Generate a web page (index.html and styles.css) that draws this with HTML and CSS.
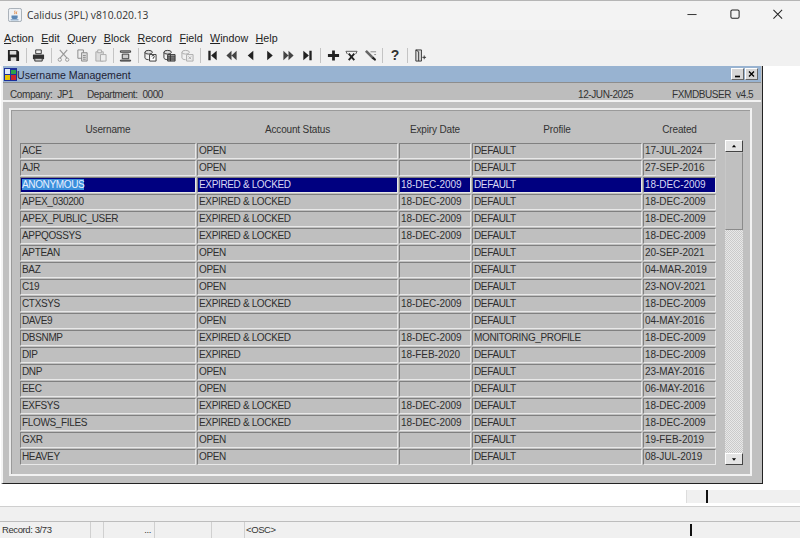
FILE: index.html
```html
<!DOCTYPE html>
<html lang="en">
<head>
<meta charset="utf-8">
<title>Calidus (3PL) v810.020.13</title>
<link rel="stylesheet" href="styles.css">
</head>
<body>
<div class="app">
  <header class="titlebar">
    <svg class="appicon" viewBox="0 0 16 16"><rect x="0.5" y="0.5" width="15" height="15" rx="2" fill="#eef1f5" stroke="#9aa3ad"/><path d="M8 3c-1 1.500 1 2-.5 4M10 4c-1 1 .5 1.500-.5 3" stroke="#d9772a" fill="none"/><path d="M4 8.500h7v2.500a2 2 0 0 1-2 1.500H6a2 2 0 0 1-2-1.500z" fill="#5a86b5"/><path d="M3 13.500h9" stroke="#5a86b5"/></svg>
    <span class="apptitle">Calidus (3PL) v810.020.13</span>
    <div class="winctrls">
      <svg viewBox="0 0 46 30"><path d="M18 14.500h10" stroke="#222"/></svg>
      <svg viewBox="0 0 46 30"><rect x="18.500" y="9.500" width="9" height="9" rx="1.500" fill="none" stroke="#222" stroke-width="1.100"/></svg>
      <svg viewBox="0 0 46 30"><path d="M18 9.500l9.500 9.500M27.500 9.500L18 19" stroke="#222" stroke-width="1.100"/></svg>
    </div>
  </header>
  <nav class="menubar">
    <span><u>A</u>ction</span><span><u>E</u>dit</span><span><u>Q</u>uery</span><span><u>B</u>lock</span><span><u>R</u>ecord</span><span><u>F</u>ield</span><span><u>W</u>indow</span><span><u>H</u>elp</span>
  </nav>
  <div class="toolbar">
    <svg class="ti" viewBox="0 0 14 14"><path d="M1 1h10l2 2v10H1z" fill="#222"/><rect x="3" y="2" width="7" height="4" fill="#ddd"/><rect x="4" y="9" width="6" height="4" fill="#ddd"/></svg>
    <i class="sep"></i>
    <svg class="ti" viewBox="0 0 14 14"><path d="M4 1h6v4H4z" fill="#eee" stroke="#333"/><path d="M1 6h12v5H1z" fill="#333"/><path d="M3 10h8v3H3z" fill="#ccc" stroke="#333"/></svg>
    <i class="sep"></i>
    <svg class="ti" viewBox="0 0 14 14"><path d="M3 1l8 9M11 1L3 10" stroke="#999" stroke-width="1.300" fill="none"/><circle cx="3" cy="11.500" r="1.800" fill="none" stroke="#999"/><circle cx="11" cy="11.500" r="1.800" fill="none" stroke="#999"/></svg>
    <svg class="ti" viewBox="0 0 14 14"><path d="M2 1h6v9H2z" fill="#eee" stroke="#888"/><path d="M6 4h6v9H6z" fill="#ddd" stroke="#888"/><path d="M7.500 7h3M7.500 9h3M7.500 11h3" stroke="#888"/></svg>
    <svg class="ti" viewBox="0 0 14 14"><path d="M2 3h8v10H2z" fill="#ddd" stroke="#aaa"/><path d="M4 1h4v3H4z" fill="#eee" stroke="#aaa"/><path d="M7 6h6v7H7z" fill="#eee" stroke="#aaa"/></svg>
    <i class="sep"></i>
    <svg class="ti" viewBox="0 0 14 14"><path d="M1.500 2h11v1.500h-11zM3.500 5.500h7v5h-7zM1.500 12h11v1h-11z" fill="#ccc" stroke="#333" stroke-width="1"/></svg>
    <i class="sep"></i>
    <svg class="ti" viewBox="0 0 14 14"><ellipse cx="5" cy="3.500" rx="4" ry="2" fill="#ddd" stroke="#333"/><path d="M1 3.500v6c0 1 1.500 2 4 2" fill="none" stroke="#333"/><path d="M6 6h7v7H6z" fill="#fff" stroke="#333"/><path d="M8.500 8a1.300 1.300 0 1 1 1.300 1.500v1" fill="none" stroke="#333"/></svg>
    <svg class="ti" viewBox="0 0 14 14"><ellipse cx="5" cy="3.500" rx="4" ry="2" fill="#ddd" stroke="#333"/><path d="M1 3.500v6c0 1 1.500 2 4 2" fill="none" stroke="#333"/><path d="M5 6h8v7H5z" fill="#999" stroke="#333"/><path d="M5 8.500h8M5 10.800h8M8 6v7" stroke="#333"/></svg>
    <svg class="ti" viewBox="0 0 14 14"><ellipse cx="5" cy="3.500" rx="4" ry="2" fill="#eee" stroke="#aaa"/><path d="M1 3.500v6c0 1 1.500 2 4 2" fill="none" stroke="#aaa"/><path d="M6 6h7v7H6z" fill="#eee" stroke="#aaa"/><path d="M8 8l3 3M11 8l-3 3" stroke="#aaa"/></svg>
    <i class="sep"></i>
    <svg class="ti nav" viewBox="0 0 14 14"><path d="M2.500 2h2.500v10H2.500zM11.500 2v10L5.500 7z" fill="#222"/></svg>
    <svg class="ti nav" viewBox="0 0 14 14"><path d="M7 2v10L1.500 7zM12.500 2v10L7 7z" fill="#444"/></svg>
    <svg class="ti nav" viewBox="0 0 14 14"><path d="M10 2v10L4 7z" fill="#222"/></svg>
    <svg class="ti nav" viewBox="0 0 14 14"><path d="M4.500 2v10l6-5z" fill="#222"/></svg>
    <svg class="ti nav" viewBox="0 0 14 14"><path d="M1.500 2v10L7 7zM7 2v10l5.500-5z" fill="#444"/></svg>
    <svg class="ti nav" viewBox="0 0 14 14"><path d="M2.500 2v10l6-5zM9 2h2.500v10H9z" fill="#222"/></svg>
    <i class="sep"></i>
    <svg class="ti" viewBox="0 0 14 14"><path d="M5.500 1.500h3v4h4.500v3H8.500v4h-3v-4H1v-3h4.500z" fill="#222"/></svg>
    <svg class="ti" viewBox="0 0 14 14"><path d="M1 2.500h12M1 2.500l1.500 3M13 2.500l-1.500 3" stroke="#555" fill="none"/><path d="M4 5l6 7M10 5l-6 7" stroke="#222" stroke-width="2"/></svg>
    <svg class="ti" viewBox="0 0 14 14"><path d="M1 3l2-2 7 7-2 2z" fill="#666"/><path d="M8 10l2-2 3 3-1 2z" fill="#222"/><path d="M7 3h6M11 6h2" stroke="#888"/></svg>
    <i class="sep"></i>
    <span class="qm">?</span>
    <i class="sep"></i>
    <svg class="ti" viewBox="0 0 14 14"><path d="M2 1h6v12H2z" fill="#ddd" stroke="#333"/><path d="M2 1l3 2v10" fill="none" stroke="#333"/><path d="M9 9h4M11 7v4" stroke="#333"/></svg>
  </div>

  <main class="desktop">
    <section class="formwin">
      <div class="formtitle">
        <svg class="formicon" viewBox="0 0 13 13"><rect width="13" height="13" fill="#1c2f9a"/><rect x="1" y="1" width="5" height="5" fill="#dfe8f5"/><rect x="7" y="2" width="5" height="4" fill="#2ba34a"/><rect x="1" y="7" width="5" height="5" fill="#e8c400"/><rect x="7" y="7" width="5" height="5" fill="#c9262c"/></svg>
        <span class="formname">Username Management</span>
        <span class="fbtn"><svg viewBox="0 0 12 12"><path d="M3 9h6" stroke="#000" stroke-width="2"/></svg></span>
        <span class="fbtn"><svg viewBox="0 0 12 12"><path d="M3 3l6 6M9 3L3 9" stroke="#000" stroke-width="1.600"/></svg></span>
      </div>
      <div class="inforow">
        <span class="info-a">Company:&nbsp; JP1</span>
        <span class="info-b">Department:&nbsp; 0000</span>
        <span class="info-c">12-JUN-2025</span>
        <span class="info-d">FXMDBUSER&nbsp; v4.5</span>
      </div>
      <div class="formbody">
        <div class="frame">
          <div class="tablewrap">
            <div class="grid">
              <div class="hd">Username</div><div class="hd">Account Status</div><div class="hd">Expiry Date</div><div class="hd">Profile</div><div class="hd">Created</div>

              <div class="c">ACE</div><div class="c">OPEN</div><div class="c"></div><div class="c">DEFAULT</div><div class="c">17-JUL-2024</div>
              <div class="c">AJR</div><div class="c">OPEN</div><div class="c"></div><div class="c">DEFAULT</div><div class="c">27-SEP-2016</div>
              <div class="c s"><mark>ANONYMOUS</mark></div><div class="c s">EXPIRED &amp; LOCKED</div><div class="c s">18-DEC-2009</div><div class="c s">DEFAULT</div><div class="c s">18-DEC-2009</div>
              <div class="c">APEX_030200</div><div class="c">EXPIRED &amp; LOCKED</div><div class="c">18-DEC-2009</div><div class="c">DEFAULT</div><div class="c">18-DEC-2009</div>
              <div class="c">APEX_PUBLIC_USER</div><div class="c">EXPIRED &amp; LOCKED</div><div class="c">18-DEC-2009</div><div class="c">DEFAULT</div><div class="c">18-DEC-2009</div>
              <div class="c">APPQOSSYS</div><div class="c">EXPIRED &amp; LOCKED</div><div class="c">18-DEC-2009</div><div class="c">DEFAULT</div><div class="c">18-DEC-2009</div>
              <div class="c">APTEAN</div><div class="c">OPEN</div><div class="c"></div><div class="c">DEFAULT</div><div class="c">20-SEP-2021</div>
              <div class="c">BAZ</div><div class="c">OPEN</div><div class="c"></div><div class="c">DEFAULT</div><div class="c">04-MAR-2019</div>
              <div class="c">C19</div><div class="c">OPEN</div><div class="c"></div><div class="c">DEFAULT</div><div class="c">23-NOV-2021</div>
              <div class="c">CTXSYS</div><div class="c">EXPIRED &amp; LOCKED</div><div class="c">18-DEC-2009</div><div class="c">DEFAULT</div><div class="c">18-DEC-2009</div>
              <div class="c">DAVE9</div><div class="c">OPEN</div><div class="c"></div><div class="c">DEFAULT</div><div class="c">04-MAY-2016</div>
              <div class="c">DBSNMP</div><div class="c">EXPIRED &amp; LOCKED</div><div class="c">18-DEC-2009</div><div class="c">MONITORING_PROFILE</div><div class="c">18-DEC-2009</div>
              <div class="c">DIP</div><div class="c">EXPIRED</div><div class="c">18-FEB-2020</div><div class="c">DEFAULT</div><div class="c">18-DEC-2009</div>
              <div class="c">DNP</div><div class="c">OPEN</div><div class="c"></div><div class="c">DEFAULT</div><div class="c">23-MAY-2016</div>
              <div class="c">EEC</div><div class="c">OPEN</div><div class="c"></div><div class="c">DEFAULT</div><div class="c">06-MAY-2016</div>
              <div class="c">EXFSYS</div><div class="c">EXPIRED &amp; LOCKED</div><div class="c">18-DEC-2009</div><div class="c">DEFAULT</div><div class="c">18-DEC-2009</div>
              <div class="c">FLOWS_FILES</div><div class="c">EXPIRED &amp; LOCKED</div><div class="c">18-DEC-2009</div><div class="c">DEFAULT</div><div class="c">18-DEC-2009</div>
              <div class="c">GXR</div><div class="c">OPEN</div><div class="c"></div><div class="c">DEFAULT</div><div class="c">19-FEB-2019</div>
              <div class="c">HEAVEY</div><div class="c">OPEN</div><div class="c"></div><div class="c">DEFAULT</div><div class="c">08-JUL-2019</div>
            </div>
            <div class="scroll">
              <div class="sbtn"><svg viewBox="0 0 17 12"><path d="M6 7.500h5L8.500 4.500z" fill="#000"/></svg></div>
              <div class="thumb"></div>
              <div class="track"></div>
              <div class="sbtn"><svg viewBox="0 0 17 12"><path d="M6 5h5L8.500 8z" fill="#000"/></svg></div>
            </div>
          </div>
        </div>
      </div>
    </section>
    <div class="hintrow"><div class="hint"><i class="mark"></i></div></div>
  </main>

  <div class="msgbar"></div>
  <footer class="status">
    <span class="st w1">Record: 3/73</span>
    <span class="st w2"></span>
    <span class="st w3">...</span>
    <span class="st w4"></span>
    <span class="st w5"></span>
    <span class="st w6">&lt;OSC&gt;</span>
    <i class="mark"></i>
  </footer>
</div>
</body>
</html>
```
FILE: styles.css
```css
* { box-sizing: border-box; }
html, body { margin: 0; padding: 0; background: #fff; }
body { width: 800px; height: 538px; overflow: hidden; font-family: "Liberation Sans", Arial, sans-serif; color: #222; }
.app { width: 800px; height: 538px; display: flex; flex-direction: column; background: #fff; border-top: 1px solid #b5b5b5; }

.titlebar { height: 29px; display: flex; align-items: center; padding-left: 8px; padding-bottom: 2px; background: #f3f3f3; flex: none; }
.appicon { width: 14px; height: 14px; margin-right: 5px; }
.apptitle { font: 10.300px "Open Sans", "Liberation Sans", sans-serif; color: #333; }
.winctrls { margin-left: auto; display: flex; }
.winctrls svg { width: 42px; height: 28px; margin-right: 1px; }

.menubar { height: 16px; display: flex; align-items: center; gap: 7.500px; padding-left: 4px; background: #f1f1f1; font-size: 10.700px; color: #222; flex: none; }
.menubar u { text-decoration-thickness: 1px; text-underline-offset: 1px; }

.toolbar { height: 20px; display: flex; align-items: center; gap: 5.500px; padding-left: 7px; padding-bottom: 2px; background: #f1f1f1; flex: none; }
.ti { width: 13px; height: 13px; flex: none; }
.sep { width: 1px; height: 15px; background: #c4c4c4; flex: none; }
.nav { margin-right: 0.500px; }
.qm { font: bold 14px "Liberation Sans", sans-serif; width: 13px; text-align: center; color: #333; }

.desktop { flex: 1; min-height: 0; background: #fff; position: relative; }
.formwin { width: 762px; height: 418px; margin-left: 1px; background: #c0c0c0; border-left: 2px solid #f4f4f4; border-right: 1px solid #222; border-bottom: 1px solid #222; display: flex; flex-direction: column; }
.formtitle { height: 17px; background: #98b3d1; display: flex; align-items: center; padding-left: 1px; padding-right: 3px; gap: 0; flex: none; border-bottom: 1px solid #8d8d8d; margin-right: 1px; }
.formicon { width: 13px; height: 13px; flex: none; margin-right: 0; }
.formname { font-size: 10.600px; color: #223; margin-right: auto; padding-top: 2px; }
.fbtn { width: 13px; height: 12px; margin-left: 1px; background: #d6d6d6; border: 1px solid; border-color: #fff #666 #666 #fff; display: flex; }
.fbtn svg { width: 100%; height: 100%; }

.inforow { height: 19px; display: flex; align-items: center; font-size: 10px; letter-spacing: -0.400px; color: #333; background: #bdbdbd; border-bottom: 2px solid #f2f2f2; flex: none; padding-left: 7px; padding-top: 5px; margin-right: 1px; }
.info-a { width: 77px; white-space: nowrap; }
.info-b { width: 491px; white-space: nowrap; }
.info-c { width: 94px; white-space: nowrap; }
.info-d { white-space: nowrap; }

.formbody { flex: 1; padding: 6px 10px 7px 6px; min-height: 0; }
.frame { height: 100%; border: 2px solid; border-color: #ececec #f2f2f2 #f2f2f2 #ececec; box-shadow: inset 1px 1px 0 #9a9a9a; padding: 10px 8px 0 9px; }
.tablewrap { display: flex; align-items: flex-start; }
.grid { display: grid; grid-template-columns: 176px 201px 72px 170px 73px; grid-template-rows: 22px; grid-auto-rows: 16px; row-gap: 1px; column-gap: 1px; width: 696px; }
.hd { text-align: center; font-size: 10px; letter-spacing: -0.150px; color: #333; height: 22px; line-height: 14px; padding-top: 3px; }
.c { border: 1px solid; border-color: #808080 #e8e8e8 #e8e8e8 #808080; background: #bfbfbf; font-size: 10px; letter-spacing: -0.350px; line-height: 14px; padding-left: 1px; color: #2e2e2e; white-space: nowrap; overflow: hidden; }
.c:nth-child(5n+3), .c:nth-child(5n+5) { letter-spacing: -0.050px; }
.c.s { background: #000080; color: #d8d8f4; }
mark { background: #3a8fdc; color: #e8f0ff; }

.scroll { width: 18px; height: 325px; margin-left: 9px; margin-top: 20px; display: flex; flex-direction: column; flex: none; }
.sbtn { height: 12px; flex: none; background: #e4e4e4; border: 1px solid; border-color: #fff #444 #444 #fff; display: flex; }
.sbtn svg { width: 100%; height: 100%; }
.thumb { height: 78px; flex: none; background: #c0c0c0; border: 1px solid; border-color: #c8c8c8 #8a8a8a #8a8a8a #c8c8c8; }
.track { flex: 1; background: repeating-conic-gradient(#cacaca 0 25%, #e8e8e8 0 50%) 0 0 / 2px 2px; }

.hintrow { display: flex; justify-content: flex-end; padding-top: 6px; }
.hint { width: 114px; height: 13px; background: #f0f0f0; border-left: 1px solid #ddd; padding-left: 19px; }
.mark { display: block; width: 2px; height: 13px; background: #111; flex: none; }

.msgbar { height: 16px; background: #f0f0f0; border-top: 1px solid #cfcfcf; border-bottom: 1px solid #bdbdbd; flex: none; }
.status { height: 16px; background: #f0f0f0; display: flex; align-items: center; font-size: 9.500px; letter-spacing: -0.400px; color: #333; flex: none; }
.st { height: 100%; border-right: 1px solid #d0d0d0; line-height: 16px; white-space: nowrap; }
.w1 { width: 91px; padding-left: 2px; }
.w2 { width: 13px; }
.w3 { width: 51px; text-align: right; padding-right: 3px; }
.w4 { width: 57px; }
.w5 { width: 33px; }
.w6 { width: 445px; padding-left: 1px; border-right: 0; }
.status .mark { height: 12px; }
```
